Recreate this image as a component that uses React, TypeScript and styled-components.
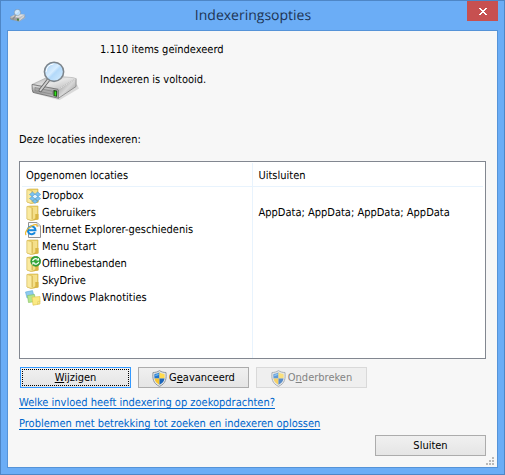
import React from "react";
import styled, { createGlobalStyle, css } from "styled-components";

const GlobalStyle = createGlobalStyle`
  *, *::before, *::after { box-sizing: border-box; }
  body {
    margin: 0;
    font-family: "DejaVu Sans Condensed", "Noto Sans", sans-serif;
    font-size: 11px;
    line-height: 16px;
    text-rendering: geometricPrecision;
    color: #000;
  }
  button { font: inherit; color: inherit; }
`;

const Window = styled.div`
  display: flex;
  flex-direction: column;
  min-height: 100vh;
  padding: 0 6px 6px;
  background: #6badf6;
  border: 1px solid #4e86c6;
`;

const TitleBar = styled.header`
  display: grid;
  grid-template-columns: 32px 1fr 31px;
  height: 29px;
`;

const TitleIcon = styled.div`
  padding: 8px 0 0 3px;
  svg { display: block; }
`;

const Title = styled.h1`
  margin: 0;
  text-align: center;
  font-family: "Open Sans", "Noto Sans", sans-serif;
  font-size: 14px;
  font-weight: 400;
  line-height: 29px;
  color: #1d3454;
`;

const CloseButton = styled.button`
  display: flex;
  align-items: center;
  justify-content: center;
  width: 31px;
  height: 20px;
  padding: 0;
  border: 0;
  background: #c75050;
`;

const Client = styled.main`
  flex: 1;
  display: flex;
  flex-direction: column;
  padding: 11px 11px 11px;
  background: #f7f7f7;
  border: 1px solid #5593d8;
`;

const Status = styled.section`
  display: flex;
  height: 90px;
  padding-left: 12px;
`;

const DriveHolder = styled.div`
  width: 69px;
  padding-top: 19px;
`;

const StatusText = styled.div`
  display: flex;
  flex-direction: column;
  gap: 14px;
`;

const Line = styled.p`
  margin: 0;
`;

const Caption = styled.h2`
  margin: 0;
  font-size: 11px;
  font-weight: 400;
  line-height: 16px;
`;

const ListBox = styled.div`
  display: flex;
  height: 198px;
  margin-top: 13px;
  padding: 1px 2px 0;
  background: #fff;
  border: 1px solid #828790;
`;

const Table = styled.table`
  width: 100%;
  height: 100%;
  table-layout: fixed;
  border-collapse: separate;
  border-spacing: 0;
`;

const HeadCell = styled.th<{ $first?: boolean }>`
  height: 24px;
  padding: 3px 6px 0;
  border-bottom: 1px solid #e8f3fd;
  text-align: left;
  font-weight: 400;
  ${(p) => p.$first && css`width: 50%; padding-left: 4px; border-right: 1px solid #e8f3fd;`}
`;

const Cell = styled.td<{ $first?: boolean }>`
  height: 17px;
  padding: 1px 6px 0;
  white-space: nowrap;
  ${(p) => p.$first && css`padding: 0 0 0 3px; border-right: 1px solid #e8f3fd;`}
`;

const FillerRow = styled.tr`
  height: auto;
  td { height: auto; }
`;

const Location = styled.div`
  display: flex;
  align-items: flex-end;
  gap: 1px;
  height: 17px;
  svg { flex: none; }
`;

const Actions = styled.div`
  display: flex;
  gap: 7px;
  padding: 8px 0 0 1px;
`;

const Button = styled.button<{ $focused?: boolean }>`
  display: flex;
  align-items: center;
  justify-content: center;
  gap: 2px;
  width: 111px;
  height: 21px;
  padding: 1px 0 0;
  border: 1px solid #acacac;
  background: linear-gradient(#f0f0f0, #e5e5e5);
  ${(p) => p.$focused && css`
    border-color: #3399ff;
    outline: 1px dotted #000;
    outline-offset: -3px;
  `}
  &:disabled {
    border-color: #d9d9d9;
    background: #efefef;
    color: #838383;
  }
`;

const Links = styled.nav`
  display: flex;
  flex-direction: column;
  align-items: flex-start;
  gap: 5px;
  padding-top: 7px;
`;

const Link = styled.a`
  color: #0066cc;
  text-decoration: underline;
  text-underline-offset: 2px;
`;

const Footer = styled.footer`
  display: flex;
  justify-content: flex-end;
  margin-top: auto;
  position: relative;
`;

const Grip = styled.svg`
  position: absolute;
  right: -8px;
  bottom: -9px;
`;

function DriveIcon({ size, id }: { size: number; id: string }) {
  return (
    <svg width={size} height={size * 0.8} viewBox="0 0 50 40" aria-hidden="true">
      <defs>
        <linearGradient id={id + "top"} x1="0" y1="0" x2="1" y2="1">
          <stop offset="0" stopColor="#a9a9a9" />
          <stop offset="0.5" stopColor="#e6e6e6" />
          <stop offset="1" stopColor="#b4b4b4" />
        </linearGradient>
        <linearGradient id={id + "front"} x1="0" y1="0" x2="0" y2="1">
          <stop offset="0" stopColor="#eee" />
          <stop offset="0.5" stopColor="#999" />
          <stop offset="1" stopColor="#c4c4c4" />
        </linearGradient>
        <linearGradient id={id + "side"} x1="0" y1="0" x2="1" y2="1">
          <stop offset="0" stopColor="#888" />
          <stop offset="0.5" stopColor="#d8d8d8" />
          <stop offset="1" stopColor="#888" />
        </linearGradient>
        <linearGradient id={id + "lens"} x1="0" y1="0" x2="1" y2="1">
          <stop offset="0" stopColor="#9fcdf5" />
          <stop offset="0.45" stopColor="#d8edff" />
          <stop offset="0.55" stopColor="#b3d9fa" />
          <stop offset="1" stopColor="#d8efff" />
        </linearGradient>
      </defs>
      <path d="M3 33 29 40 49 28 47 24Z" fill="#bbb" opacity=".5" />
      <path d="M1 24 20 15 43 17 46 18 28 29Z" fill={`url(#${id}top)`} stroke="#999" strokeWidth=".5" />
      <path d="M1 24 28 29V38L2 32Q1 30 1 24Z" fill={`url(#${id}front)`} stroke="#666" strokeWidth=".8" />
      <path d="M28 29 46 18V26L28 38Z" fill={`url(#${id}side)`} stroke="#777" strokeWidth=".7" />
      <path d="M4 27 22 31V34L4 30Z" fill="#aaa" stroke="#777" strokeWidth=".5" />
      <path d="M23 29.5 26.6 30.3V36.5L23 35.7Z" fill="#163e10" />
      <path d="M24 31H25.8V35.4H24Z" fill="#35e21d" />
      <path d="M28 29 46 18" stroke="#f4f4f4" strokeWidth=".8" />
      <path d="M18 19 9.5 30" stroke="#666" strokeWidth="3.6" strokeLinecap="round" />
      <path d="M18 19 9.5 30" stroke="#cfcfcf" strokeWidth="1.8" strokeLinecap="round" />
      <circle cx="23.5" cy="11" r="9.8" fill={`url(#${id}lens)`} stroke="#7d858c" strokeWidth="1.6" />
      <path d="M15.5 11Q16 4 23 3" fill="none" stroke="#fff" strokeWidth="1" />
    </svg>
  );
}

type Kind = "dropbox" | "folder" | "ie" | "offline" | "notes";

function FolderShape() {
  return (
    <g>
      <path d="M2 1.5 5 1H13V14L6 15.5 2 14Z" fill="#ebd067" stroke="#cfae48" strokeWidth=".6" />
      <path d="M2 1.5 7 3V15.5L2 14Z" fill="#faeaa0" stroke="#d8bc58" strokeWidth=".5" />
      <path d="M7.5 2H10V14L7.5 15Z" fill="#f4df88" />
      <path d="M10.5 9H13.5V14.5L7 15.5 10.5 13Z" fill="#d9b545" />
      <path d="M11 2V9" stroke="#fff0b4" />
      <path d="M7.2 3V14" stroke="#cfb04e" strokeWidth=".8" />
    </g>
  );
}

function LocationIcon({ kind }: { kind: Kind }) {
  return (
    <svg width="16" height="16" viewBox="0 0 16 16" aria-hidden="true">
      {(kind === "folder" || kind === "dropbox" || kind === "offline") && <FolderShape />}
      {kind === "dropbox" && (
        <g fill="#7cc3f2" stroke="#3f93d3" strokeWidth=".5">
          <path d="M4.5 6.5 7.5 4 10 6.2 7.2 8.5Z" />
          <path d="M10 6.2 12.7 4 15.7 6.5 13 8.5Z" />
          <path d="M4.5 10.5 7.2 8.5 10 10.8 7.5 12.8Z" />
          <path d="M10 10.8 13 8.5 15.7 10.5 12.7 12.8Z" />
          <path d="M7.5 13.2 10 11.4 12.7 13.2 10 15.4Z" />
          <path d="M7.2 8.5 10 6.2 13 8.5 10 10.8Z" fill="#e4f4ff" />
        </g>
      )}
      {kind === "ie" && (
        <g>
          <path d="M3.5.5H12L15.5 4V15.5H3.5Z" fill="#fafafa" stroke="#929292" />
          <path d="M12 .5V4H15.5" fill="#ddd" stroke="#aaa" strokeWidth=".7" />
          <path d="M10 10.2A3.9 3.9 0 1 1 10.5 8.3H3.2" fill="none" stroke="#1688dc" strokeWidth="2" />
          <path d="M1.2 13C-.8 11.5 2 6.5 6.5 4 10 2 12.7 2 12 4.8" fill="none" stroke="#f0b82c" strokeWidth="1.2" />
        </g>
      )}
      {kind === "offline" && (
        <g>
          <circle cx="10.7" cy="5.3" r="4.9" fill="#35a83b" stroke="#16852a" strokeWidth=".7" />
          <path d="M7.6 5A3.2 3.2 0 0 1 12.5 3.2M13.7 5.8A3.2 3.2 0 0 1 8.8 7.6" fill="none" stroke="#fff" strokeWidth="1.2" />
          <path d="M11.3 4.6H14V1.8ZM10 6.2H7.3V9Z" fill="#fff" />
        </g>
      )}
      {kind === "notes" && (
        <g strokeWidth=".6">
          <path d="M.5 2 7.5.6 9 6.5 2 8Z" fill="#8fcbef" stroke="#5ea9d6" />
          <path d="M2.5 5.5 9.5 4.5 10.5 11.5 3.5 12.5Z" fill="#b7e68c" stroke="#82be5b" />
          <path d="M7 7.2 15 6.5V14L8 15.2Z" fill="#fbe983" stroke="#dec34e" />
          <path d="M12.5 14.4 12.8 11.5 15 11.3Z" fill="#fff8c7" stroke="#dec34e" />
        </g>
      )}
    </svg>
  );
}

function Shield() {
  return (
    <svg width="15" height="17" viewBox="0 0 15 17" aria-hidden="true">
      <path d="M7.5.6C5.5 2 3.4 2.5 1 2.5.4 8.5 1 13.4 7.5 16.4 14 13.4 14.6 8.5 14 2.5 11.6 2.5 9.5 2 7.5.6Z" fill="#e3e5e6" stroke="#8e969d" />
      <path d="M7.5 2.3C6 3.4 4.3 3.8 2.5 3.9Q2.2 6.5 2.5 8.5H7.5Z" fill="#2375cb" />
      <path d="M7.5 2.3C9 3.4 10.7 3.8 12.5 3.9Q12.8 6.5 12.5 8.5H7.5Z" fill="#ffda4d" />
      <path d="M2.5 8.5H7.5V14.8Q3.2 12.7 2.5 8.5Z" fill="#f9c52e" />
      <path d="M12.5 8.5H7.5V14.8Q11.8 12.7 12.5 8.5Z" fill="#1c65ba" />
      <path d="M3.2 4.7Q5 4.5 6.8 3.5V5Q5 6 3.2 6.2Z" fill="#68b4ef" />
    </svg>
  );
}

const FadedIcon = styled.span`
  display: flex;
  opacity: 0.7;
`;

const locations: { name: string; kind: Kind; excluded?: string }[] = [
  { name: "Dropbox", kind: "dropbox" },
  { name: "Gebruikers", kind: "folder", excluded: "AppData; AppData; AppData; AppData" },
  { name: "Internet Explorer-geschiedenis", kind: "ie" },
  { name: "Menu Start", kind: "folder" },
  { name: "Offlinebestanden", kind: "offline" },
  { name: "SkyDrive", kind: "folder" },
  { name: "Windows Plaknotities", kind: "notes" },
];

export default function App() {
  return (
    <>
      <GlobalStyle />
      <Window>
        <TitleBar>
          <TitleIcon><DriveIcon size={16} id="small" /></TitleIcon>
          <Title>Indexeringsopties</Title>
          <CloseButton aria-label="Sluiten">
            <svg width="8" height="7" viewBox="0 0 8 7" shapeRendering="crispEdges" aria-hidden="true">
              <path d="M0 0h2v1h1v1h2V1h1V0h2v1H7v1H6v1H5v1h1v1h1v1h1v1H6V6H5V5H3v1H2v1H0V6h1V5h1V4h1V3H2V2H1V1H0Z" fill="#fff" />
            </svg>
          </CloseButton>
        </TitleBar>
        <Client>
          <Status>
            <DriveHolder><DriveIcon size={49} id="large" /></DriveHolder>
            <StatusText>
              <Line>1.110 items geïndexeerd</Line>
              <Line>Indexeren is voltooid.</Line>
            </StatusText>
          </Status>
          <Caption id="locations">Deze locaties indexeren:</Caption>
          <ListBox>
            <Table aria-labelledby="locations">
              <thead>
                <tr>
                  <HeadCell $first scope="col">Opgenomen locaties</HeadCell>
                  <HeadCell scope="col">Uitsluiten</HeadCell>
                </tr>
              </thead>
              <tbody>
                {locations.map((l) => (
                  <tr key={l.name}>
                    <Cell $first><Location><LocationIcon kind={l.kind} />{l.name}</Location></Cell>
                    <Cell>{l.excluded}</Cell>
                  </tr>
                ))}
                <FillerRow aria-hidden="true"><Cell $first /><Cell /></FillerRow>
              </tbody>
            </Table>
          </ListBox>
          <Actions>
            <Button $focused><span><u>W</u>ijzigen</span></Button>
            <Button><Shield /><span>G<u>e</u>avanceerd</span></Button>
            <Button disabled><FadedIcon><Shield /></FadedIcon><span>O<u>n</u>derbreken</span></Button>
          </Actions>
          <Links>
            <Link href="#indexering">Welke invloed heeft indexering op zoekopdrachten?</Link>
            <Link href="#problemen">Problemen met betrekking tot zoeken en indexeren oplossen</Link>
          </Links>
          <Footer>
            <Button>Sluiten</Button>
            <Grip width="8" height="8" viewBox="0 0 8 8" shapeRendering="crispEdges" aria-hidden="true">
              <path d="M6 0h2v2H6zM3 3h2v2H3zM6 3h2v2H6zM0 6h2v2H0zM3 6h2v2H3zM6 6h2v2H6z" fill="#b9b9b9" />
            </Grip>
          </Footer>
        </Client>
      </Window>
    </>
  );
}
